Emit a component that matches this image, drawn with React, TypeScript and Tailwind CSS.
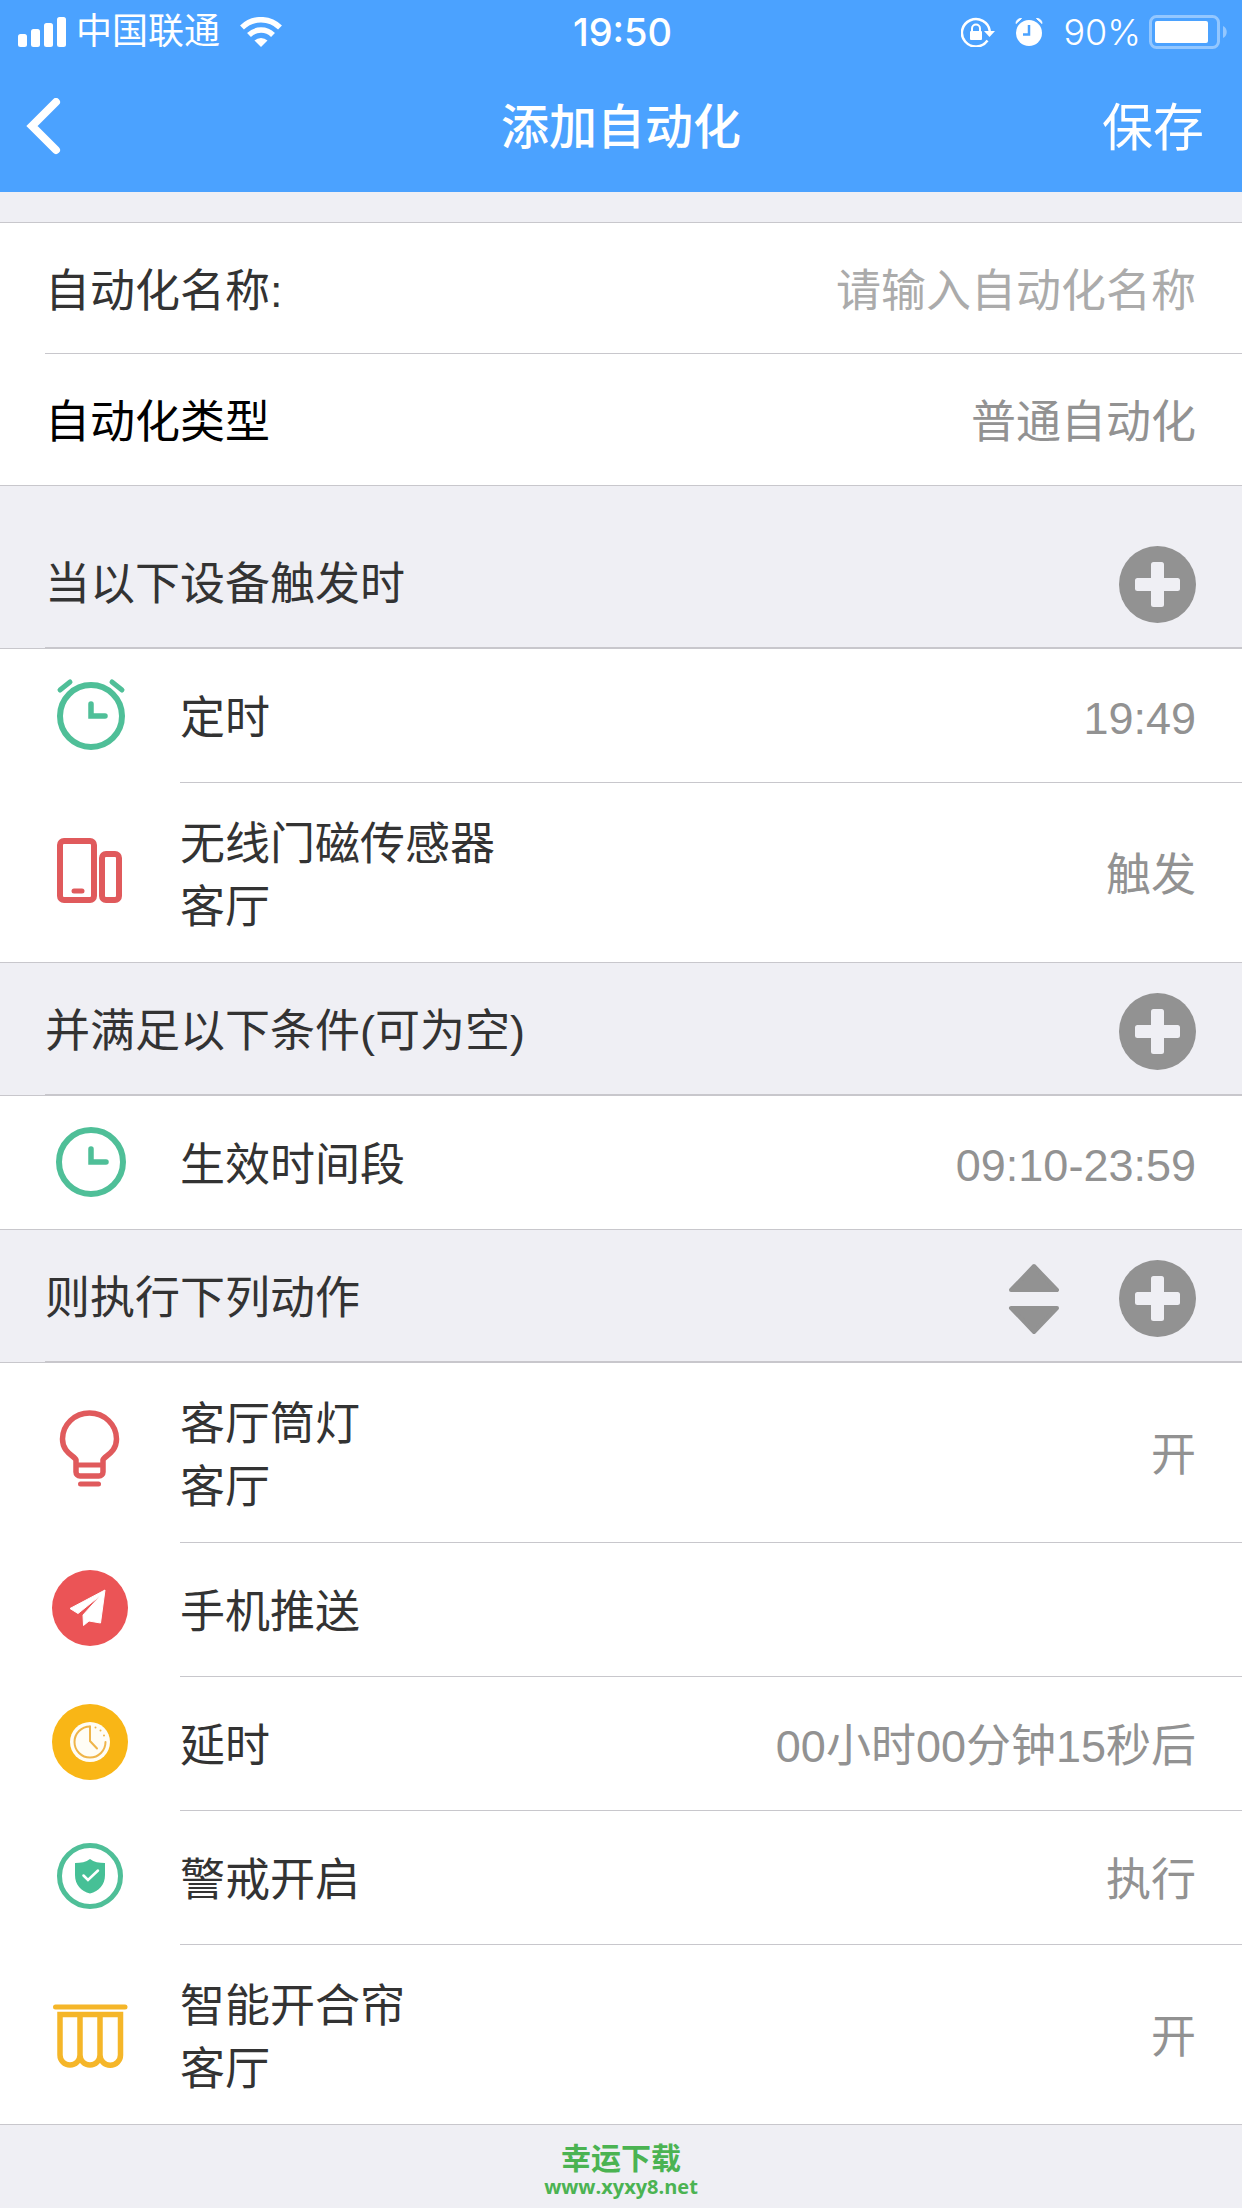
import React, { useState } from 'react';

type Item = {
  id: number;
  title: string;
  room?: string;
  value?: string;
  icon: React.ReactNode;
};

const GREEN = '#4fbf98';
const RED = '#e05a5c';
const YELLOW = '#f5b629';

const AlarmIcon = () => (
  <svg viewBox="0 0 90 90" className="size-[90px]" fill="none" stroke={GREEN} strokeLinecap="round" aria-hidden="true">
    <circle cx="46" cy="46" r="31" strokeWidth="6" />
    <path d="M46 34V46H60" strokeWidth="5.5" />
    <path d="M15 20 25 12M67 12 77 20" strokeWidth="5" />
  </svg>
);

const ClockIcon = () => (
  <svg viewBox="0 0 90 90" className="size-[90px]" fill="none" stroke={GREEN} strokeLinecap="round" aria-hidden="true">
    <circle cx="46" cy="45" r="32" strokeWidth="6" />
    <path d="M46 32V45H61" strokeWidth="5.5" />
  </svg>
);

const SensorIcon = () => (
  <svg viewBox="0 0 90 90" className="size-[90px]" fill="none" stroke={RED} strokeLinecap="round" aria-hidden="true">
    <rect x="15" y="14" width="34" height="59" rx="4" strokeWidth="6" />
    <rect x="57" y="27" width="17" height="46" rx="4" strokeWidth="6" />
    <path d="M29 64H37" strokeWidth="5" />
  </svg>
);

const BulbIcon = () => (
  <svg viewBox="0 0 90 90" className="size-[90px]" fill="none" stroke={RED} strokeLinecap="round" aria-hidden="true">
    <path
      d="M31 65V53C30 49 17.5 46 17.5 32A27 26 0 0 1 71.5 32C71.5 46 59 49 58 53V65A4 4 0 0 1 54 69H35A4 4 0 0 1 31 65Z"
      strokeWidth="5.5"
    />
    <path d="M32 58H57" strokeWidth="5" />
    <path d="M35.5 77H53.5" strokeWidth="5" />
  </svg>
);

const PushIcon = () => (
  <svg viewBox="0 0 90 90" className="size-[90px]" aria-hidden="true">
    <circle cx="45" cy="44" r="38" fill="#eb5456" />
    <path
      d="M60 26 25 44.5 33 49.5 56 31 38 51 38.5 61.5 44 57 55.5 59Z"
      fill="white"
      stroke="white"
      strokeLinejoin="round"
    />
  </svg>
);

const DelayIcon = () => (
  <svg viewBox="0 0 90 90" className="size-[90px]" aria-hidden="true">
    <circle cx="45" cy="44" r="38" fill="#f9b616" />
    <circle cx="45" cy="44" r="20" fill="#fffdf5" />
    <g fill="none" stroke="#efb54a" strokeWidth="2" strokeLinecap="round">
      <path d="M45 28.5A15.5 15.5 0 1 0 60.5 44" />
      <path d="M45 28.5V43L52 50.5" />
      <path d="M50.5 29.5V29.5M55.5 32.5V32.5M59 37.5V37.5" />
    </g>
  </svg>
);

const GuardIcon = () => (
  <svg viewBox="0 0 90 90" className="size-[90px]" fill="none" aria-hidden="true">
    <circle cx="45" cy="44" r="30.5" stroke={GREEN} strokeWidth="5" />
    <path
      d="M45 27C49 30 54 31 60 31V43C60 53 54 59 45 61.5C36 59 30 53 30 43V31C36 31 41 30 45 27Z"
      fill="#46c096"
    />
    <path d="M38.5 43.5 43 48 53 38.5" stroke="white" strokeWidth="2.5" strokeLinecap="round" />
  </svg>
);

const CurtainIcon = () => (
  <svg viewBox="0 0 90 90" className="size-[90px]" fill="none" stroke={YELLOW} strokeLinecap="round" aria-hidden="true">
    <path d="M10.500 18H80" strokeWidth="5" />
    <path
      d="M15 25.5H75.5V66A10 10 0 0 1 55 66A10 10 0 0 1 35 66A10 10 0 0 1 15 66ZM35 26V66M55 26V66"
      strokeWidth="5.5"
    />
  </svg>
);

const triggers: Item[] = [
  { id: 1, title: '定时', value: '19:49', icon: <AlarmIcon /> },
  { id: 2, title: '无线门磁传感器', room: '客厅', value: '触发', icon: <SensorIcon /> },
];

const conditions: Item[] = [
  { id: 1, title: '生效时间段', value: '09:10-23:59', icon: <ClockIcon /> },
];

const actions: Item[] = [
  { id: 1, title: '客厅筒灯', room: '客厅', value: '开', icon: <BulbIcon /> },
  { id: 2, title: '手机推送', icon: <PushIcon /> },
  { id: 3, title: '延时', value: '00小时00分钟15秒后', icon: <DelayIcon /> },
  { id: 4, title: '警戒开启', value: '执行', icon: <GuardIcon /> },
  { id: 5, title: '智能开合帘', room: '客厅', value: '开', icon: <CurtainIcon /> },
];

const StatusBar = () => (
  <div className="grid h-16 grid-cols-[1fr_auto_1fr] items-center pl-[18px] pr-[15px] text-4xl">
    <div className="flex items-center gap-2.5">
      <svg viewBox="0 0 48 30" className="h-[30px] w-12" fill="white" aria-hidden="true">
        <rect x="0" y="17" width="9" height="13" rx="2.5" />
        <rect x="13" y="12" width="9" height="18" rx="2.5" />
        <rect x="26" y="6" width="9" height="24" rx="2.5" />
        <rect x="39" y="0" width="9" height="30" rx="2.5" />
      </svg>
      <span className="mr-2.5">中国联通</span>
      <svg viewBox="0 0 42 30" className="h-[30px] w-[42px]" fill="none" stroke="white" aria-hidden="true">
        <path d="M2 10.5A27 27 0 0 1 40 10.5" strokeWidth="5.5" />
        <path d="M9 18A17 17 0 0 1 33 18" strokeWidth="5.5" />
        <path d="M14.5 23.5A9.5 9.5 0 0 1 27.5 23.5L21 30Z" fill="white" stroke="none" />
      </svg>
    </div>
    <span className="font-['Inter',sans-serif] text-[38px] font-medium">19:50</span>
    <div className="flex items-center justify-end">
      <svg viewBox="0 0 34 30" className="mr-5 h-[30px] w-[34px]" fill="none" aria-hidden="true">
        <path d="M26.5 23.5A14 13.7 0 1 1 28.8 14" stroke="white" strokeWidth="2.5" />
        <path d="M23 14H34L28.5 20Z" fill="white" />
        <rect x="9" y="14" width="12" height="9" rx="1" fill="white" />
        <path d="M11 14V11.5A4 4 0 0 1 19 11.5V14" stroke="white" strokeWidth="2" />
      </svg>
      <svg viewBox="0 0 28 30" className="mr-5 h-[30px] w-7" aria-hidden="true">
        <circle cx="14" cy="16" r="13" fill="white" />
        <path d="M14 8V17.5H8" fill="none" stroke="#4ba2ff" strokeWidth="2.5" />
        <path d="M1 6.5A5 5 0 0 1 6.500 1.5ZM27 6.5A5 5 0 0 0 21.5 1.5Z" fill="white" stroke="white" />
      </svg>
      <span className="mr-2 font-['Inter',sans-serif] font-light">90%</span>
      <svg viewBox="0 0 78 34" className="h-[34px] w-[78px]" aria-hidden="true">
        <rect x="1.5" y="1.5" width="68" height="31" rx="6" fill="none" stroke="#93c7ff" strokeWidth="3" />
        <rect x="6" y="6" width="53" height="22" rx="2" fill="white" />
        <path d="M74 11C79 13 79 21 74 23Z" fill="#93c7ff" />
      </svg>
    </div>
  </div>
);

const AddButton = ({ label }: { label: string }) => (
  <button type="button" aria-label={label} className="size-[77px]">
    <svg viewBox="0 0 77 77" className="size-full" aria-hidden="true">
      <circle cx="38.5" cy="38.5" r="38.5" fill="#929292" />
      <rect x="32" y="16" width="13" height="45" rx="2.5" fill="#efeff4" />
      <rect x="16" y="32" width="45" height="13" rx="2.5" fill="#efeff4" />
    </svg>
  </button>
);

const SortButton = () => (
  <button type="button" aria-label="排序" className="h-[72px] w-[52px]">
    <svg viewBox="0 0 52 72" className="size-full" fill="#929292" stroke="#929292" strokeWidth="4" strokeLinejoin="round" aria-hidden="true">
      <path d="M26 3 49 27H3Z" />
      <path d="M3 45H49L26 69Z" />
    </svg>
  </button>
);

type SectionProps = {
  title: string;
  items: Item[];
  sortable?: boolean;
  spaced?: boolean;
};

const Section = ({ title, items, sortable, spaced }: SectionProps) => (
  <section>
    <div className={`border-b border-[#c8c7cc] pl-[45px] ${spaced ? 'pt-[30px]' : ''}`}>
      <div className="flex h-[132px] items-center justify-between border-b border-[#c8c7cc] pr-[46px] pt-1.5">
        <h2>{title}</h2>
        <div className="flex items-center gap-[59px]">
          {sortable && <SortButton />}
          <AddButton label={`添加 ${title}`} />
        </div>
      </div>
    </div>

    <ul className="bg-white">
      {items.map((item) => (
        <li key={item.id} className="group">
          <button
            type="button"
            className={`flex w-full items-center border-[#c8c7cc] pl-[45px] text-left group-last:border-b ${
              item.room ? 'min-h-[180px]' : 'min-h-[134px]'
            }`}
          >
            <span className="mb-0.5 shrink-0">{item.icon}</span>
            <span className="ml-[45px] flex flex-1 items-center justify-between self-stretch border-b border-[#c8c7cc] pr-[46px] pt-1.5 group-last:border-b-0">
              <span>
                <span className="block">{item.title}</span>
                {item.room && <span className="block">{item.room}</span>}
              </span>
              <span className="text-[#929292]">{item.value}</span>
            </span>
          </button>
        </li>
      ))}
    </ul>
  </section>
);

const App = () => {
  const [name, setName] = useState('');

  return (
    <div className="min-h-screen bg-[#efeff4] font-['Liberation_Sans','Noto_Sans_CJK_SC',sans-serif] text-[45px] leading-[63px] text-[#333333]">
      <header className="bg-[#4ba2ff] text-white">
        <StatusBar />
        {/* Navigation bar */}
        <div className="grid h-32 grid-cols-[1fr_auto_1fr] items-center px-[26px]">
          <button type="button" aria-label="返回" className="h-[60px] w-9">
            <svg viewBox="0 0 36 60" className="size-full" fill="none" stroke="white" strokeWidth="8" strokeLinecap="round" aria-hidden="true">
              <path d="M30 4 6 28 30 52" />
            </svg>
          </button>
          <h1 className="text-5xl font-medium">添加自动化</h1>
          <button type="button" className="mr-3 justify-self-end text-[51px]">
            保存
          </button>
        </div>
      </header>

      <main>
        {/* Name and type */}
        <div className="mt-[30px] border-y border-[#c8c7cc] bg-white pl-[45px]">
          <div className="flex h-[131px] items-center border-b border-[#c8c7cc] pr-[46px] pt-1.5">
            <label htmlFor="automation-name">自动化名称:</label>
            <input
              id="automation-name"
              type="text"
              value={name}
              onChange={(e) => setName(e.target.value)}
              placeholder="请输入自动化名称"
              className="min-w-0 flex-1 text-right outline-none placeholder:text-[#ababab]"
            />
          </div>
          <button type="button" className="flex h-[131px] w-full items-center justify-between pr-[46px] pt-1.5">
            <span className="text-black">自动化类型</span>
            <span className="text-[#929292]">普通自动化</span>
          </button>
        </div>

        <Section title="当以下设备触发时" items={triggers} spaced />
        <Section title="并满足以下条件(可为空)" items={conditions} />
        <Section title="则执行下列动作" items={actions} sortable />
      </main>

      <footer className="flex flex-col items-center pt-[18px] font-bold text-[#4bb352]">
        <span className="text-3xl leading-8">幸运下载</span>
        <a href="#" className="font-['Open_Sans',sans-serif] text-xl leading-6">
          www.xyxy8.net
        </a>
      </footer>
    </div>
  );
};

export default App;
